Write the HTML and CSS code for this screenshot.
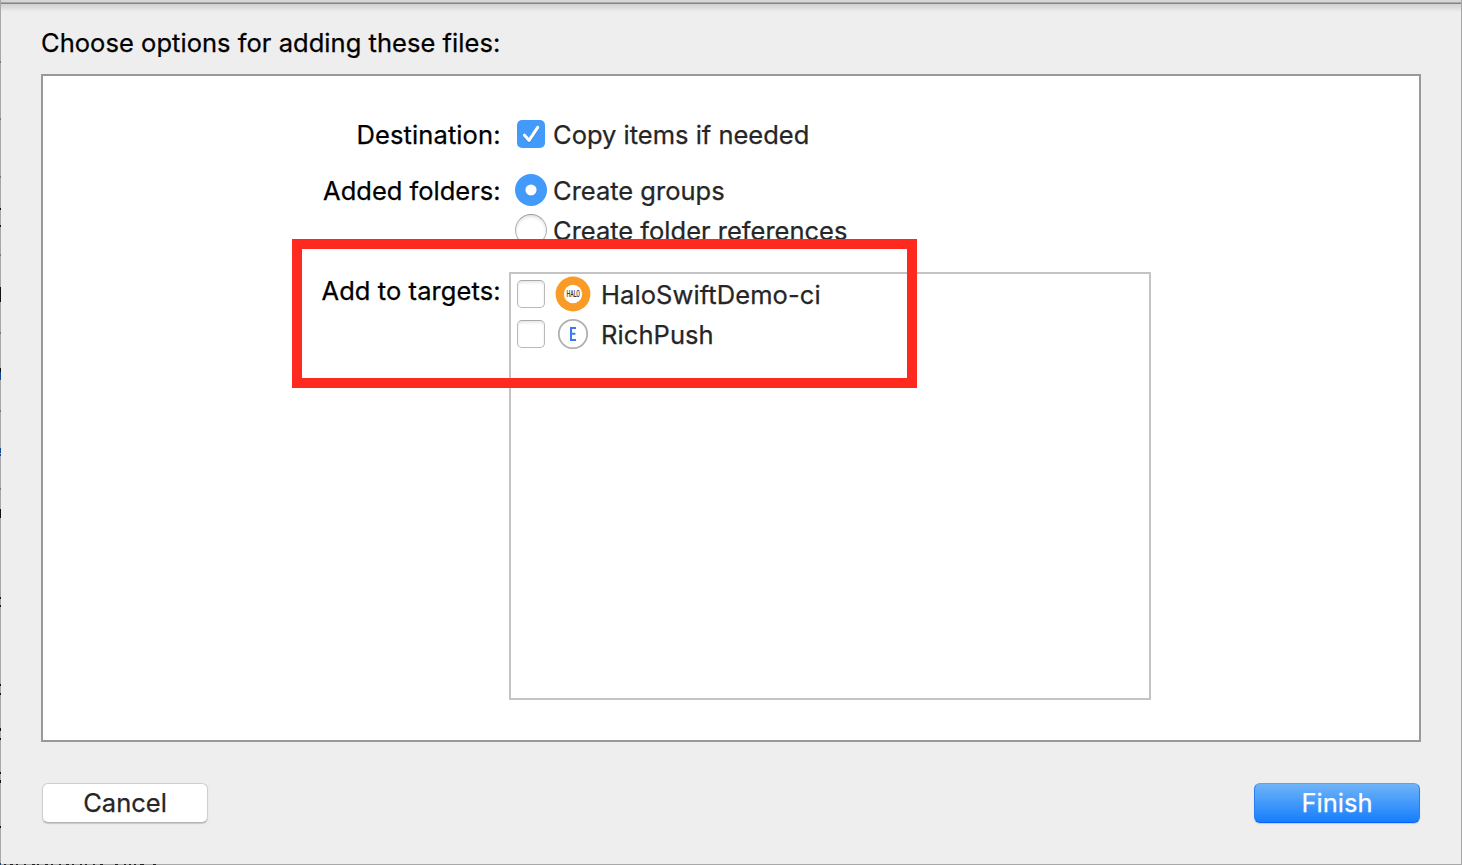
FILE: index.html
```html
<!DOCTYPE html>
<html lang="en">
<head>
<meta charset="utf-8">
<title>Add Files</title>
<link rel="stylesheet" href="styles.css">
</head>
<body>
<main class="sheet">
  <h1 class="title"><span class="t-title">Choose options for adding these files:</span></h1>
  <section class="panel">
    <div class="row row-dest">
      <div class="label"><span class="t-dest">Destination:</span></div>
      <div class="option"><span class="slot"><svg width="32" height="32" viewBox="0 0 32 32"><defs><filter id="ds" x="-20%" y="-20%" width="140%" height="150%"><feDropShadow dx="0" dy="1" stdDeviation=".6" flood-color="#1b62ae" flood-opacity=".55"/></filter></defs><rect x="2" y="2" width="28" height="28" rx="5" fill="#429bfa"/><path d="M9.5 17.2 14 22.3 22.7 9.3" fill="none" stroke="#fff" stroke-width="3" stroke-linecap="round" stroke-linejoin="round" filter="url(#ds)"/></svg></span><span class="t-copy">Copy items if needed</span></div>
    </div>
    <div class="row row-folders">
      <div class="label"><span class="t-added">Added folders:</span></div>
      <div class="option"><span class="slot"><svg width="32" height="32" viewBox="0 0 32 32"><circle cx="16" cy="16" r="16" fill="#429bfa"/><circle cx="16" cy="16.8" r="5.8" fill="#2f80dc" opacity=".6"/><circle cx="16" cy="16" r="5.6" fill="#fff"/></svg></span><span class="t-groups">Create groups</span></div>
    </div>
    <div class="row row-refs">
      <div class="label"></div>
      <div class="option"><span class="slot"><span class="radio"></span></span><span class="t-refs">Create folder references</span></div>
    </div>
    <div class="row row-targets">
      <div class="label"><span class="t-targets">Add to targets:</span></div>
      <div class="list">
        <div class="target"><span class="checkbox"></span><svg class="icon" width="36" height="36" viewBox="0 0 36 36"><circle cx="18" cy="18" r="17.4" fill="#f99b26"/><circle cx="18" cy="18" r="9.2" fill="#fff"/><text x="11.4" y="21.3" textLength="13.6" lengthAdjust="spacingAndGlyphs" class="halo">HALO</text></svg><span class="t-halo">HaloSwiftDemo-ci</span></div>
        <div class="target"><span class="checkbox"></span><svg class="icon" width="36" height="36" viewBox="0 0 36 36"><circle cx="18" cy="18" r="14.2" fill="#fff" stroke="#b0b0b0" stroke-width="1.8"/><path d="M21 12H16V24H21M16 17.8H20.4" fill="none" stroke="#3c78f0" stroke-width="2"/></svg><span class="t-rich">RichPush</span></div>
      </div>
    </div>
  </section>
  <footer class="buttons">
    <button class="btn cancel"><span class="t-cancel">Cancel</span></button>
    <button class="btn finish"><span class="t-finish">Finish</span></button>
  </footer>
</main>
<div class="highlight"></div>
<svg class="edge" width="170" height="865" viewBox="0 0 170 865"><path d="M.5 208v2M.5 225v2M.5 287v15M.5 368v4M.5 509v9M.5 597v2M.5 605v2M.5 684v2M.5 693v2M.5 728v3M.5 738v2M.5 772v2M.5 780v3M.5 826v2" stroke="#111"/><path d="M.5 372v8M.5 448v5M.5 454v2M.5 863v2" stroke="#164a91"/><path d="M.5 61v2M.5 118v2M.5 176v2M.5 254v2M.5 332v2M.5 410v2M.5 488v2" stroke="#777"/><path d="M4 864.5h2m4 0h3m3 0h2m6 0h2m6 0h3m2 0h2m6 0h3m3 0h2m6 0h2m5 0h3m3 0h2m6 0h2m3 0h2m6 0h2m5 0h3m12 0h3m6 0h2m3 0h2m3 0h2m4 0h4m9 0h3" stroke="#222"/></svg>
</body>
</html>
```
FILE: styles.css
```css
* { box-sizing: border-box; }
body { margin: 0; width: 1462px; height: 865px; overflow: hidden; background: #ececec; font-family: Inter, "Liberation Sans", sans-serif; font-size: 25.5px; line-height: 30px; color: #000; }
span[class^="t-"] { white-space: nowrap; -webkit-text-stroke: .25px currentColor; }
.t-title { letter-spacing: .04px; }
.t-dest { letter-spacing: .1px; }
.t-targets, .t-halo, .t-rich { letter-spacing: .08px; }
.sheet { width: 1462px; height: 865px; padding: 28px 40px 0; background: linear-gradient(#d6d6d6 0 2px, #aaa 2px 3px, #858585 3px 4px, #d0d0d0 4px, #dedede 8px, #eee 12px); border: solid #a8a8a8; border-width: 0 1px 1px; display: flex; flex-direction: column; }
.title { margin: 0 0 16px; height: 30px; font-size: inherit; font-weight: 400; }
.panel { height: 668px; flex: none; border: 2px solid #999; background: #fff; padding-top: 42px; }
.row { display: flex; }
.label { width: 458px; padding-right: .4px; text-align: right; flex: none; }
.label span { display: inline-block; }
.option { display: flex; align-items: center; height: 32px; color: #262626; margin-left: 14px; }
.row-dest { margin-bottom: 24px; }
.row-folders { margin-bottom: 8px; }
.row-dest .label, .row-folders .label { padding-top: 2px; }
.row-refs { margin-bottom: 26px; }
.slot { display: flex; width: 32px; height: 32px; margin-right: 6px; }
.option > span:last-child { padding-top: 1px; }
.radio { width: 32px; height: 32px; border-radius: 50%; border: 1px solid #b2b2b2; border-top-color: #999; box-shadow: inset 0 2px 3px #e2e2e2; }
.row-targets .label { padding-top: 4px; }
.list { width: 642px; height: 428px; margin-left: 8px; border: 2px solid #c4c4c4; color: #262626; }
.target { display: flex; align-items: center; height: 40px; padding-left: 6px; }
.checkbox { width: 28px; height: 28px; border: 1px solid #b9b9b9; border-top-color: #aaa; border-radius: 5px; box-shadow: inset 0 2px 3px #e8e8e8; }
.icon { margin: 0 10px; flex: none; }
.target > span:last-child { padding-top: 1px; }
.halo { font: 500 9.4px Roboto, sans-serif; fill: #333; }
.buttons { display: flex; justify-content: space-between; padding: 41px 1px 0; }
.btn { width: 166px; height: 40px; border: 0; border-radius: 6px; padding: 0; font: inherit; }
.cancel { background: #fff; color: #262626; border: 1px solid #cfcfcf; border-bottom-color: #b5b5b5; box-shadow: 0 1px 1px #c8c8c8; }
.finish { color: #fff; background: linear-gradient(#6fb4f8, #167efd); border: 1px solid #2a7ff0; border-top-color: #5aa2ee; border-bottom-color: #0b62f5; box-shadow: 0 1px 1px #bccbe0; }
.highlight { position: absolute; left: 292px; top: 239px; width: 625px; height: 149px; border: 10px solid #ff2a1f; }
.edge { position: absolute; left: 0; top: 0; }
```
